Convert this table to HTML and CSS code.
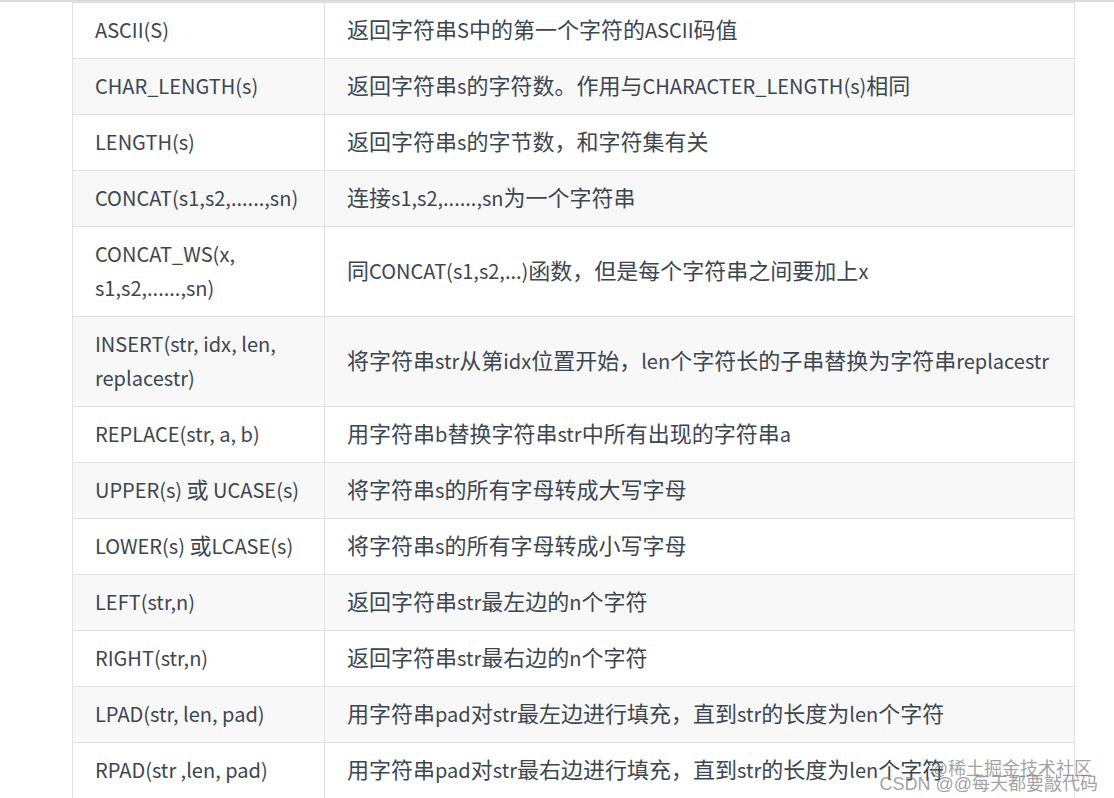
FILE: index.html
```html
<!DOCTYPE html>
<html lang="zh">
<head>
<meta charset="utf-8">
<link rel="stylesheet" href="styles.css">
</head>
<body>
<div class="page">
  <table class="fn-table">
    <tbody>
      <tr><td>ASCII(S)</td><td><span class="zh">返回字符串</span>S<span class="zh">中的第一个字符的</span>ASCII<span class="zh">码值</span></td></tr>
      <tr><td>CHAR_LENGTH(s)</td><td><span class="zh">返回字符串</span>s<span class="zh">的字符数。作用与</span>CHARACTER_LENGTH(s)<span class="zh">相同</span></td></tr>
      <tr><td>LENGTH(s)</td><td><span class="zh">返回字符串</span>s<span class="zh">的字节数，和字符集有关</span></td></tr>
      <tr><td>CONCAT(s1,s2,......,sn)</td><td><span class="zh">连接</span>s1,s2,......,sn<span class="zh">为一个字符串</span></td></tr>
      <tr><td>CONCAT_WS(x,<br>s1,s2,......,sn)</td><td><span class="zh">同</span>CONCAT(s1,s2,...)<span class="zh">函数，但是每个字符串之间要加上</span>x</td></tr>
      <tr><td>INSERT(str, idx, len,<br>replacestr)</td><td><span class="zh">将字符串</span>str<span class="zh">从第</span>idx<span class="zh">位置开始，</span>len<span class="zh">个字符长的子串替换为字符串</span>replacestr</td></tr>
      <tr><td>REPLACE(str, a, b)</td><td><span class="zh">用字符串</span>b<span class="zh">替换字符串</span>str<span class="zh">中所有出现的字符串</span>a</td></tr>
      <tr><td>UPPER(s) <span class="zh">或</span> UCASE(s)</td><td><span class="zh">将字符串</span>s<span class="zh">的所有字母转成大写字母</span></td></tr>
      <tr><td>LOWER(s) <span class="zh">或</span>LCASE(s)</td><td><span class="zh">将字符串</span>s<span class="zh">的所有字母转成小写字母</span></td></tr>
      <tr><td>LEFT(str,n)</td><td><span class="zh">返回字符串</span>str<span class="zh">最左边的</span>n<span class="zh">个字符</span></td></tr>
      <tr><td>RIGHT(str,n)</td><td><span class="zh">返回字符串</span>str<span class="zh">最右边的</span>n<span class="zh">个字符</span></td></tr>
      <tr><td>LPAD(str, len, pad)</td><td><span class="zh">用字符串</span>pad<span class="zh">对</span>str<span class="zh">最左边进行填充，直到</span>str<span class="zh">的长度为</span>len<span class="zh">个字符</span></td></tr>
      <tr><td>RPAD(str ,len, pad)</td><td><span class="zh">用字符串</span>pad<span class="zh">对</span>str<span class="zh">最右边进行填充，直到</span>str<span class="zh">的长度为</span>len<span class="zh">个字符</span></td></tr>
    </tbody>
  </table>
  <div class="watermark">
    <span class="wm-line wm-top">@稀土掘金技术社区</span>
    <span class="wm-line wm-bottom">CSDN @@每天都要敲代码</span>
  </div>
</div>
</body>
</html>
```

FILE: styles.css
```css
html, body {
  margin: 0;
  padding: 0;
  background: #ffffff;
}
body {
  font-family: "Noto Sans CJK SC", "Noto Sans", sans-serif;
  color: #3c4650;
  width: 1114px;
  height: 798px;
  overflow: hidden;
}
.page {
  position: relative;
  border-top: 2px solid #dcdcdc;
  padding-left: 72px;
  height: 796px;
}
.fn-table {
  border-collapse: collapse;
  width: 1003px;
}
.fn-table td {
  border: 1px solid #e1e1e1;
  font-size: 20px;
  line-height: 34px;
  height: 34px;
  padding: 10px 22px 11px 22px;
  vertical-align: middle;
  white-space: nowrap;
}
.fn-table td:first-child {
  width: 207px;
}
.fn-table tr:nth-child(2n) td {
  background: #f8f8f8;
}
.zh {
  font-size: 22px;
  line-height: 16px;
}
.watermark {
  position: absolute;
  right: 16px;
  bottom: 6px;
  display: flex;
  flex-direction: column;
  align-items: flex-end;
  font-family: "Liberation Sans", "Noto Sans CJK SC", sans-serif;
  font-size: 18px;
  line-height: 15px;
  color: rgba(120, 120, 120, 0.7);
}
.wm-top {
  margin-right: 6px;
}
```
